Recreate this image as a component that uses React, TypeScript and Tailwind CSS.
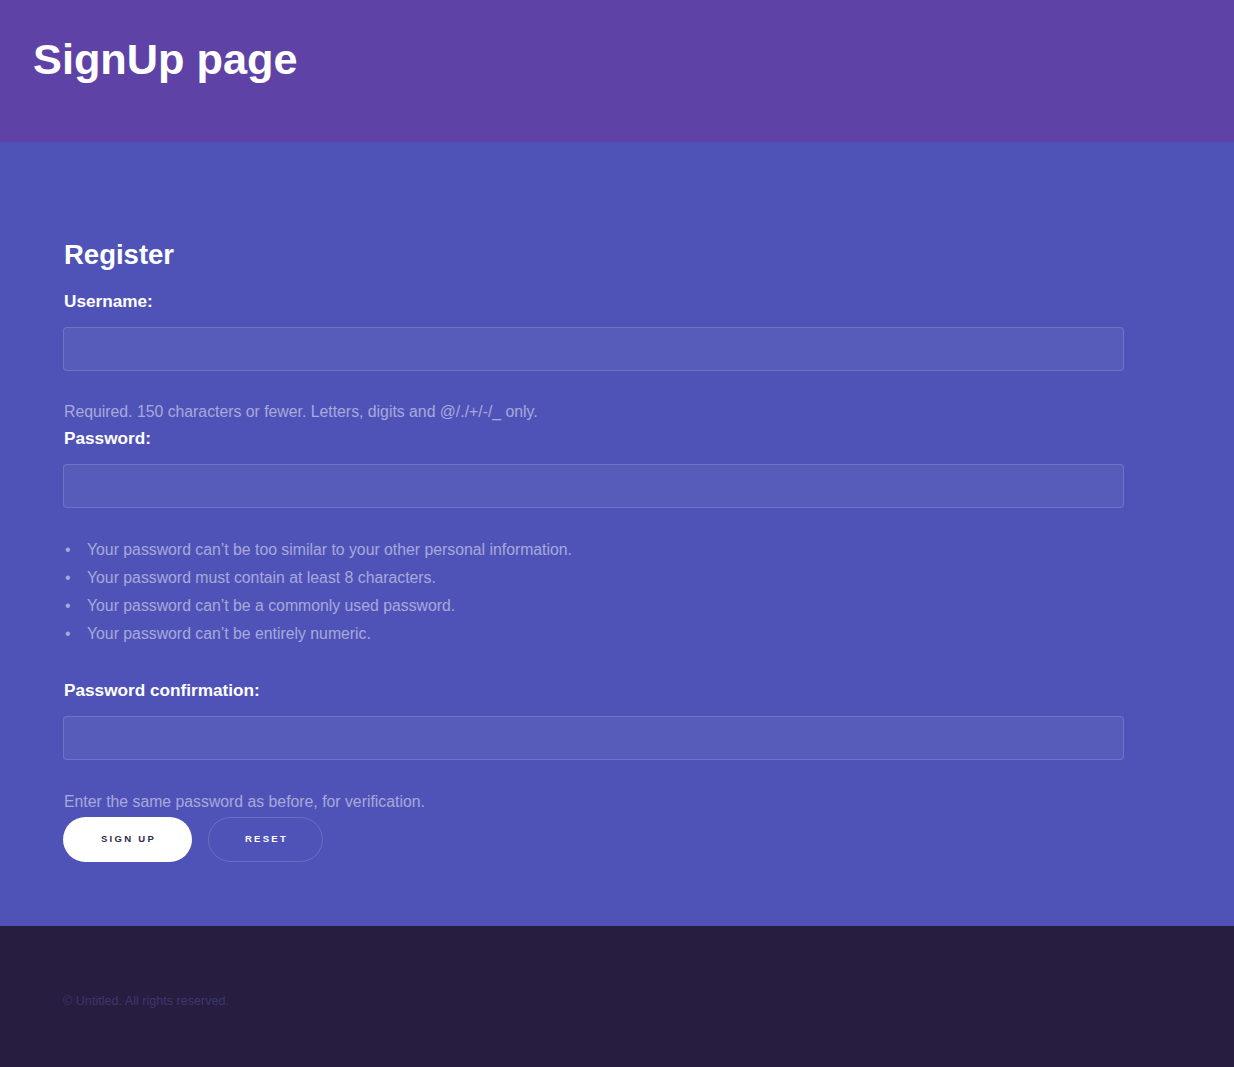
export default function App() {
  const rules = [
    "Your password can’t be too similar to your other personal information.",
    "Your password must contain at least 8 characters.",
    "Your password can’t be a commonly used password.",
    "Your password can’t be entirely numeric.",
  ];

  return (
    <div className="min-h-screen bg-[#261d41] font-['Liberation_Sans',Arial,sans-serif]">
      <header className="h-[142px] bg-[#5e42a5] px-[33px] pt-[33px]">
        <h1 className="text-[43.3px] font-bold leading-[52px] text-white">SignUp page</h1>
      </header>

      <main className="bg-[#4f53b7] px-[63px] pt-[96px] pb-[64px]">
        <div className="w-[1061px]">
          <h2 className="pl-px text-[27.5px] font-bold leading-[34px] text-white">Register</h2>

          <form className="mt-[17px]">
            <label className="block pl-px text-[17.2px] font-bold leading-[24px] text-white">Username:</label>
            <input
              type="text"
              className="mt-[14px] block h-[44px] w-full rounded-[4px] border border-white/15 bg-white/5 outline-none"
            />
            <p className="mt-[30px] pl-px text-[15.8px] leading-[22px] text-white/50">
              Required. 150 characters or fewer. Letters, digits and @/./+/-/_ only.
            </p>

            <label className="mt-[3px] block pl-px text-[17.2px] font-bold leading-[24px] text-white">Password:</label>
            <input
              type="password"
              className="mt-[14px] block h-[44px] w-full rounded-[4px] border border-white/15 bg-white/5 outline-none"
            />
            <ul className="mt-[28px] text-[15.8px] leading-[28px] text-white/50">
              {rules.map((rule) => (
                <li key={rule} className="flex">
                  <span className="w-[24px] pl-[2px]">•</span>
                  <span>{rule}</span>
                </li>
              ))}
            </ul>

            <label className="mt-[30px] block pl-px text-[17.2px] font-bold leading-[24px] text-white">
              Password confirmation:
            </label>
            <input
              type="password"
              className="mt-[14px] block h-[44px] w-full rounded-[4px] border border-white/15 bg-white/5 outline-none"
            />
            <p className="mt-[31px] pl-px text-[15.8px] leading-[22px] text-white/50">
              Enter the same password as before, for verification.
            </p>

            <div className="mt-[4px] flex gap-[16px]">
              <button
                type="button"
                className="h-[45px] w-[129px] rounded-full bg-white pl-[2px] text-[9.5px] font-bold tracking-[2.3px] text-[#2b2a4a]"
              >
                SIGN UP
              </button>
              <button
                type="button"
                className="h-[45px] w-[115px] rounded-full border border-white/15 pl-[2px] text-[9.5px] font-bold tracking-[2.3px] text-white"
              >
                RESET
              </button>
            </div>
          </form>
        </div>
      </main>

      <footer className="h-[141px] px-[63px] pt-[66px]">
        <p className="text-[12.6px] leading-[18px] text-[#40366a]">© Untitled. All rights reserved.</p>
      </footer>
    </div>
  );
}
